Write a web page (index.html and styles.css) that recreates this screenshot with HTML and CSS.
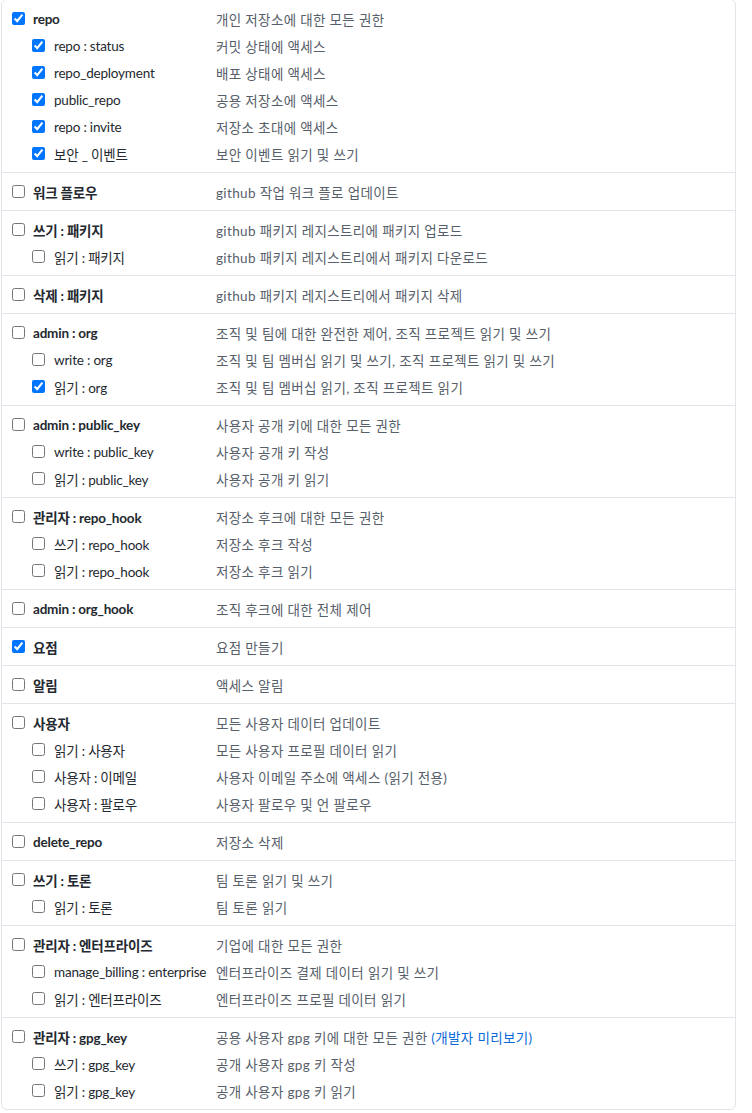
FILE: index.html
```html
<!DOCTYPE html>
<html lang="ko">
<head>
  <meta charset="UTF-8" />
  <meta name="viewport" content="width=device-width, initial-scale=1.0"/>
  <title>토큰 범위 선택</title>
  <link rel="stylesheet" href="styles.css">
</head>
<body>
  <div class="scopes">

    <div class="grupo">
      <div class="fila"><label class="top"><input type="checkbox" checked>repo</label><span class="desc">개인 저장소에 대한 모든 권한</span></div>
      <div class="fila"><label class="sub"><input type="checkbox" checked>repo : status</label><span class="desc">커밋 상태에 액세스</span></div>
      <div class="fila"><label class="sub"><input type="checkbox" checked>repo_deployment</label><span class="desc">배포 상태에 액세스</span></div>
      <div class="fila"><label class="sub"><input type="checkbox" checked>public_repo</label><span class="desc">공용 저장소에 액세스</span></div>
      <div class="fila"><label class="sub"><input type="checkbox" checked>repo : invite</label><span class="desc">저장소 초대에 액세스</span></div>
      <div class="fila"><label class="sub"><input type="checkbox" checked>보안 _ 이벤트</label><span class="desc">보안 이벤트 읽기 및 쓰기</span></div>
    </div>

    <div class="grupo">
      <div class="fila"><label class="top"><input type="checkbox">워크 플로우</label><span class="desc">github 작업 워크 플로 업데이트</span></div>
    </div>

    <div class="grupo">
      <div class="fila"><label class="top"><input type="checkbox">쓰기 : 패키지</label><span class="desc">github 패키지 레지스트리에 패키지 업로드</span></div>
      <div class="fila"><label class="sub"><input type="checkbox">읽기 : 패키지</label><span class="desc">github 패키지 레지스트리에서 패키지 다운로드</span></div>
    </div>

    <div class="grupo">
      <div class="fila"><label class="top"><input type="checkbox">삭제 : 패키지</label><span class="desc">github 패키지 레지스트리에서 패키지 삭제</span></div>
    </div>

    <div class="grupo">
      <div class="fila"><label class="top"><input type="checkbox">admin : org</label><span class="desc">조직 및 팀에 대한 완전한 제어, 조직 프로젝트 읽기 및 쓰기</span></div>
      <div class="fila"><label class="sub"><input type="checkbox">write : org</label><span class="desc">조직 및 팀 멤버십 읽기 및 쓰기, 조직 프로젝트 읽기 및 쓰기</span></div>
      <div class="fila"><label class="sub"><input type="checkbox" checked>읽기 : org</label><span class="desc">조직 및 팀 멤버십 읽기, 조직 프로젝트 읽기</span></div>
    </div>

    <div class="grupo">
      <div class="fila"><label class="top"><input type="checkbox">admin : public_key</label><span class="desc">사용자 공개 키에 대한 모든 권한</span></div>
      <div class="fila"><label class="sub"><input type="checkbox">write : public_key</label><span class="desc">사용자 공개 키 작성</span></div>
      <div class="fila"><label class="sub"><input type="checkbox">읽기 : public_key</label><span class="desc">사용자 공개 키 읽기</span></div>
    </div>

    <div class="grupo">
      <div class="fila"><label class="top"><input type="checkbox">관리자 : repo_hook</label><span class="desc">저장소 후크에 대한 모든 권한</span></div>
      <div class="fila"><label class="sub"><input type="checkbox">쓰기 : repo_hook</label><span class="desc">저장소 후크 작성</span></div>
      <div class="fila"><label class="sub"><input type="checkbox">읽기 : repo_hook</label><span class="desc">저장소 후크 읽기</span></div>
    </div>

    <div class="grupo">
      <div class="fila"><label class="top"><input type="checkbox">admin : org_hook</label><span class="desc">조직 후크에 대한 전체 제어</span></div>
    </div>

    <div class="grupo">
      <div class="fila"><label class="top"><input type="checkbox" checked>요점</label><span class="desc">요점 만들기</span></div>
    </div>

    <div class="grupo">
      <div class="fila"><label class="top"><input type="checkbox">알림</label><span class="desc">액세스 알림</span></div>
    </div>

    <div class="grupo">
      <div class="fila"><label class="top"><input type="checkbox">사용자</label><span class="desc">모든 사용자 데이터 업데이트</span></div>
      <div class="fila"><label class="sub"><input type="checkbox">읽기 : 사용자</label><span class="desc">모든 사용자 프로필 데이터 읽기</span></div>
      <div class="fila"><label class="sub"><input type="checkbox">사용자 : 이메일</label><span class="desc">사용자 이메일 주소에 액세스 (읽기 전용)</span></div>
      <div class="fila"><label class="sub"><input type="checkbox">사용자 : 팔로우</label><span class="desc">사용자 팔로우 및 언 팔로우</span></div>
    </div>

    <div class="grupo">
      <div class="fila"><label class="top"><input type="checkbox">delete_repo</label><span class="desc">저장소 삭제</span></div>
    </div>

    <div class="grupo">
      <div class="fila"><label class="top"><input type="checkbox">쓰기 : 토론</label><span class="desc">팀 토론 읽기 및 쓰기</span></div>
      <div class="fila"><label class="sub"><input type="checkbox">읽기 : 토론</label><span class="desc">팀 토론 읽기</span></div>
    </div>

    <div class="grupo">
      <div class="fila"><label class="top"><input type="checkbox">관리자 : 엔터프라이즈</label><span class="desc">기업에 대한 모든 권한</span></div>
      <div class="fila"><label class="sub"><input type="checkbox">manage_billing : enterprise</label><span class="desc">엔터프라이즈 결제 데이터 읽기 및 쓰기</span></div>
      <div class="fila"><label class="sub"><input type="checkbox">읽기 : 엔터프라이즈</label><span class="desc">엔터프라이즈 프로필 데이터 읽기</span></div>
    </div>

    <div class="grupo">
      <div class="fila"><label class="top"><input type="checkbox">관리자 : gpg_key</label><span class="desc">공용 사용자 gpg 키에 대한 모든 권한 <a href="#">(개발자 미리보기)</a></span></div>
      <div class="fila"><label class="sub"><input type="checkbox">쓰기 : gpg_key</label><span class="desc">공개 사용자 gpg 키 작성</span></div>
      <div class="fila"><label class="sub"><input type="checkbox">읽기 : gpg_key</label><span class="desc">공개 사용자 gpg 키 읽기</span></div>
    </div>

  </div>
</body>
</html>
```

FILE: styles.css
```css
body {
  margin: 0;
  font-family: Lato, "Noto Sans CJK KR", sans-serif;
  font-size: 13.5px;
  color: #24292f;
  background: #fff;
}

.scopes {
  width: 733px;
  margin: -1px 0 0 1px;
  border: 1px solid #e1e4e8;
  border-radius: 6px;
}

.grupo {
  padding: 5px 0;
  border-top: 1px solid #e1e4e8;
}

.grupo:first-child {
  border-top: none;
}

.fila {
  display: grid;
  grid-template-columns: 214px 1fr;
  align-items: center;
  height: 27px;
}

label {
  display: flex;
  align-items: center;
  white-space: nowrap;
  letter-spacing: -0.2px;
}

label input {
  width: 13px;
  height: 13px;
  margin: 0 8px 0 0;
}

.top {
  padding-left: 10px;
  font-weight: 700;
}

.sub {
  padding-left: 30px;
}

.sub input {
  margin-right: 9px;
}

.desc {
  color: #57606a;
  white-space: nowrap;
  letter-spacing: 0.35px;
}

.desc a {
  color: #0969da;
  text-decoration: none;
}
```
